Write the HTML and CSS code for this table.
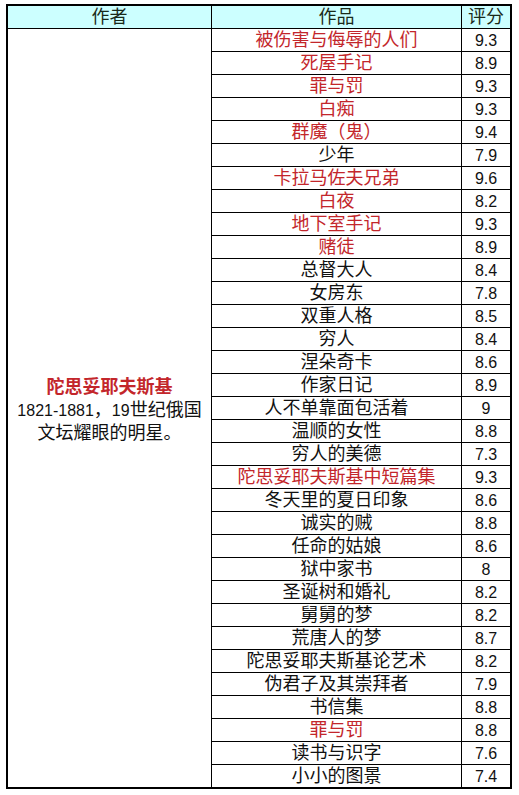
FILE: index.html
```html
<!DOCTYPE html>
<html lang="zh-CN">
<head>
<meta charset="utf-8">
<title>陀思妥耶夫斯基作品</title>
<link rel="stylesheet" href="styles.css">
</head>
<body>
<div class="sheet">
  <div class="hd">作者</div>
  <div class="hd">作品</div>
  <div class="hd">评分</div>
  <div class="author">
    <div class="name">陀思妥耶夫斯基</div>
    <div class="line"><span class="lat">1821-1881</span>，<span class="lat">19</span>世纪俄国</div>
    <div class="line">文坛耀眼的明星。</div>
  </div>
  <div class="w red">被伤害与侮辱的人们</div><div class="s">9.3</div>
  <div class="w red">死屋手记</div><div class="s">8.9</div>
  <div class="w red">罪与罚</div><div class="s">9.3</div>
  <div class="w red">白痴</div><div class="s">9.3</div>
  <div class="w red">群魔（鬼）</div><div class="s">9.4</div>
  <div class="w">少年</div><div class="s">7.9</div>
  <div class="w red">卡拉马佐夫兄弟</div><div class="s">9.6</div>
  <div class="w red">白夜</div><div class="s">8.2</div>
  <div class="w red">地下室手记</div><div class="s">9.3</div>
  <div class="w red">赌徒</div><div class="s">8.9</div>
  <div class="w">总督大人</div><div class="s">8.4</div>
  <div class="w">女房东</div><div class="s">7.8</div>
  <div class="w">双重人格</div><div class="s">8.5</div>
  <div class="w">穷人</div><div class="s">8.4</div>
  <div class="w">涅朵奇卡</div><div class="s">8.6</div>
  <div class="w">作家日记</div><div class="s">8.9</div>
  <div class="w">人不单靠面包活着</div><div class="s">9</div>
  <div class="w">温顺的女性</div><div class="s">8.8</div>
  <div class="w">穷人的美德</div><div class="s">7.3</div>
  <div class="w red">陀思妥耶夫斯基中短篇集</div><div class="s">9.3</div>
  <div class="w">冬天里的夏日印象</div><div class="s">8.6</div>
  <div class="w">诚实的贼</div><div class="s">8.8</div>
  <div class="w">任命的姑娘</div><div class="s">8.6</div>
  <div class="w">狱中家书</div><div class="s">8</div>
  <div class="w">圣诞树和婚礼</div><div class="s">8.2</div>
  <div class="w">舅舅的梦</div><div class="s">8.2</div>
  <div class="w">荒唐人的梦</div><div class="s">8.7</div>
  <div class="w">陀思妥耶夫斯基论艺术</div><div class="s">8.2</div>
  <div class="w">伪君子及其崇拜者</div><div class="s">7.9</div>
  <div class="w">书信集</div><div class="s">8.8</div>
  <div class="w red">罪与罚</div><div class="s">8.8</div>
  <div class="w">读书与识字</div><div class="s">7.6</div>
  <div class="w">小小的图景</div><div class="s">7.4</div>
</div>
</body>
</html>
```
FILE: styles.css
```css
html, body {
  margin: 0;
  padding: 0;
  background: #ffffff;
}
body {
  font-family: "Liberation Sans", "Noto Sans CJK SC", sans-serif;
  color: #111111;
}
.sheet {
  margin: 4px 0 0 6px;
  width: 502px;
  display: grid;
  grid-template-columns: 203px 249px 48px;
  grid-auto-rows: 22px;
  gap: 1px;
  padding: 2px;
  background: #000000;
}
.hd {
  background: #ccffff;
  text-align: center;
  font-size: 18px;
  line-height: 22px;
  color: #1a2a1a;
}
.author {
  grid-column: 1;
  grid-row: 2 / span 33;
  background: #ffffff;
  display: flex;
  flex-direction: column;
  justify-content: center;
  align-items: center;
  font-size: 18px;
  line-height: 23px;
  padding-top: 4px;
}
.name {
  color: #c3262b;
  font-weight: bold;
}
.lat {
  font-size: 16px;
}
.w {
  grid-column: 2;
  background: #ffffff;
  text-align: center;
  font-size: 18px;
  line-height: 23px;
  white-space: nowrap;
}
.s {
  grid-column: 3;
  background: #ffffff;
  text-align: center;
  font-size: 16px;
  line-height: 23px;
}
.red {
  color: #c3262b;
}
```
